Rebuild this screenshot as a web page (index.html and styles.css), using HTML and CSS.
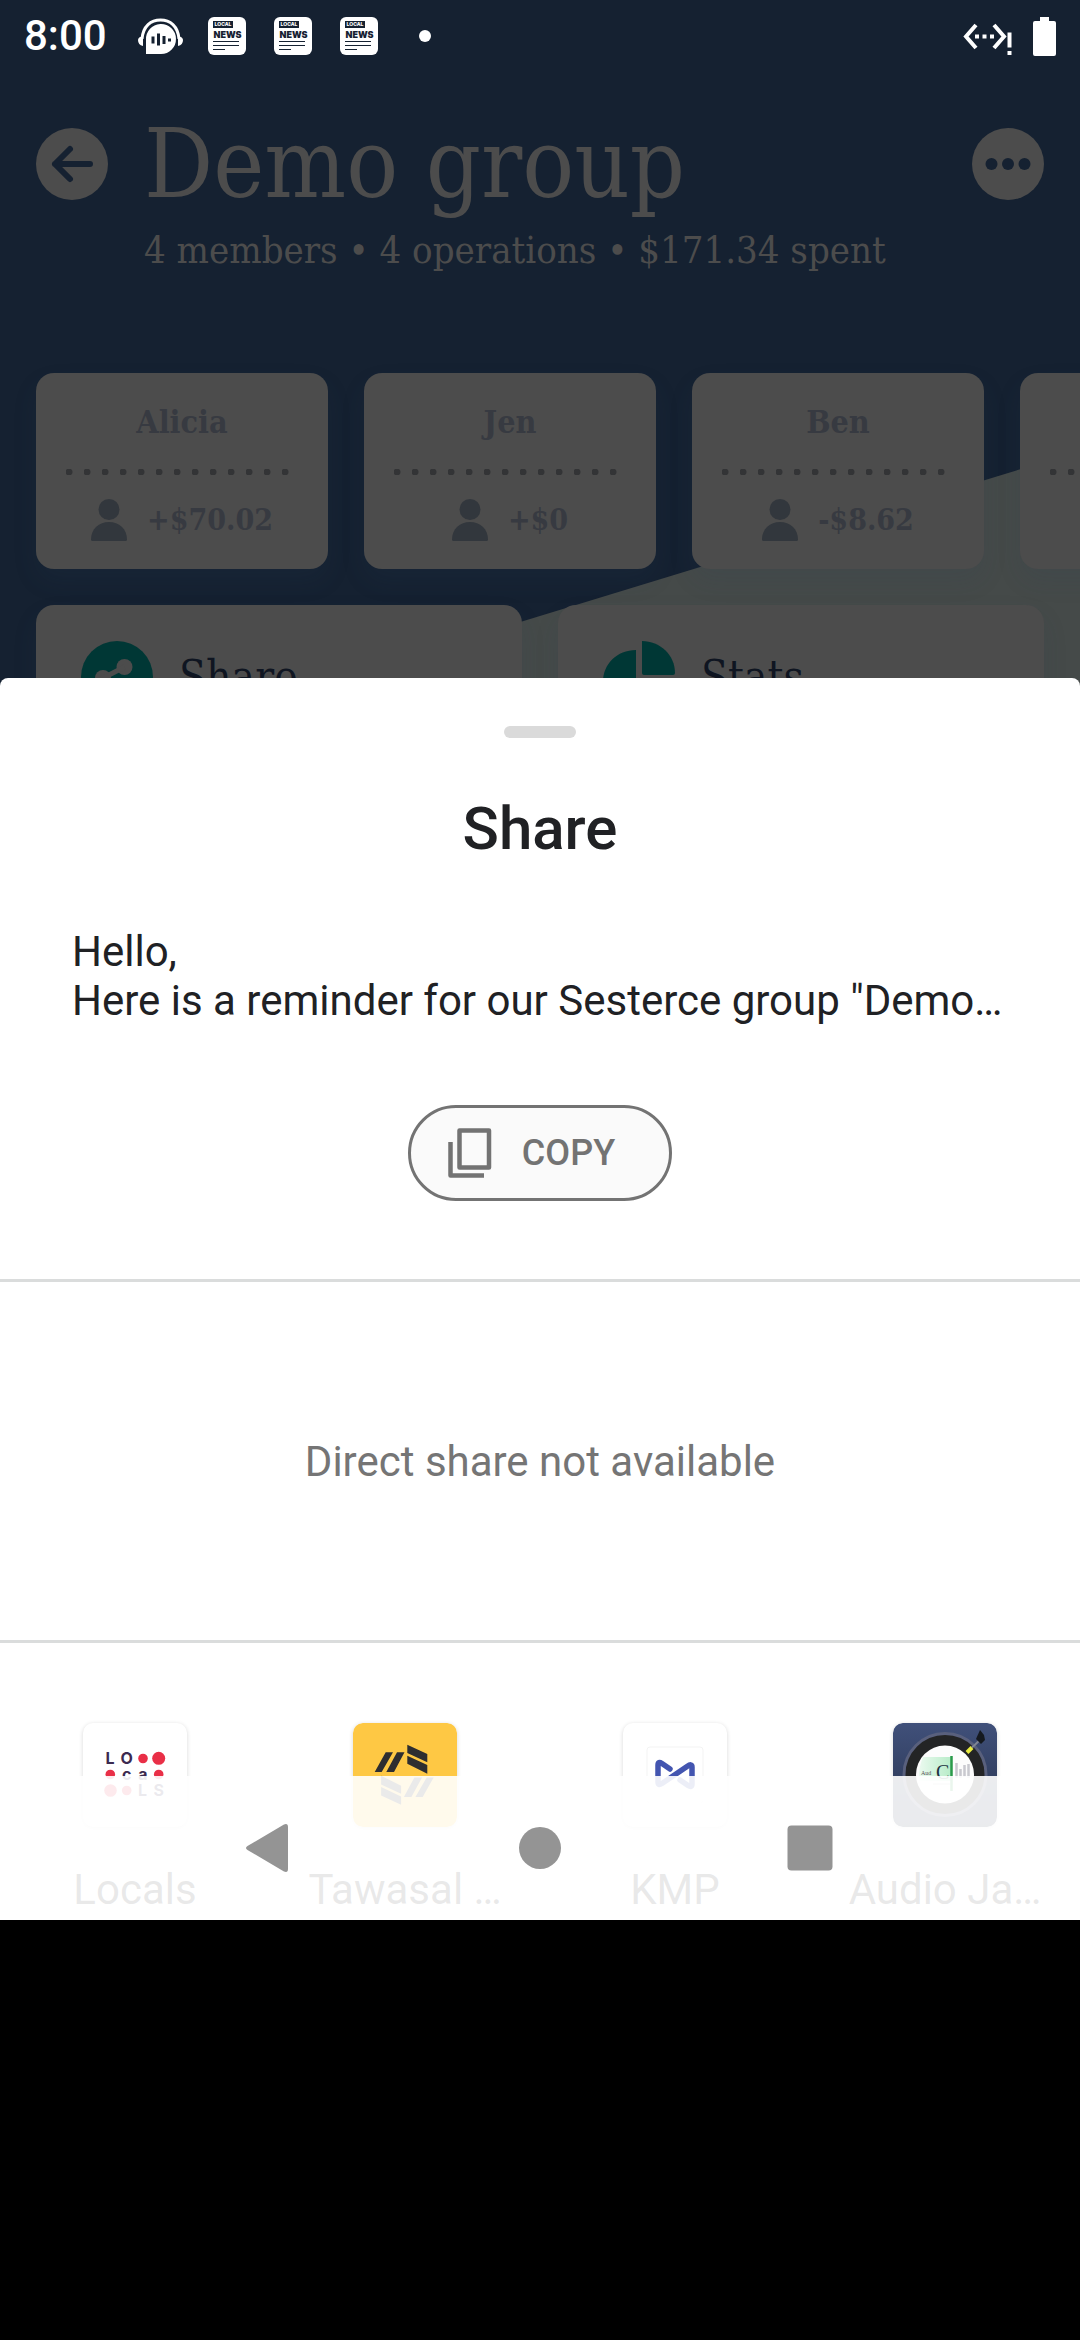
FILE: index.html
```html
<!DOCTYPE html>
<html lang="en">
<head>
<meta charset="utf-8">
<meta name="viewport" content="width=device-width, initial-scale=1">
<title>Demo group – Share</title>
<link rel="stylesheet" href="styles.css">
</head>
<body>
<svg class="defs" aria-hidden="true">
  <symbol id="news" viewBox="0 0 38 38">
    <rect width="38" height="38" rx="6" fill="#fff"/>
    <rect x="5" y="4" width="20" height="7" fill="#152131"/>
    <text x="15" y="9.2" text-anchor="middle" class="news-small">LOCAL</text>
    <text x="19.500" y="21" text-anchor="middle" class="news-big">NEWS</text>
    <path d="M5 24.500h26M5 28.500h26M5 32.500h12" stroke="#152131" stroke-width="1.200"/>
  </symbol>
  <symbol id="person" viewBox="0 0 36 42">
    <circle cx="18" cy="10.500" r="10.500"/>
    <path d="M0 40.500C0 30 8 23 18 23s18 7 18 17.500q0 1.500-1.500 1.500h-33Q0 42 0 40.500z"/>
  </symbol>
</svg>

<div class="screen">
  <section class="app">
    <svg class="slope" viewBox="0 0 1080 330" preserveAspectRatio="none" aria-hidden="true"><path d="M0 330L1080 0V330z"/></svg>

    <div class="status">
      <span class="clock">8:00</span>
      <svg class="headset" width="45" height="37" viewBox="0 0 45 37" fill="none">
        <path d="M4 21C5 8 13 2 22.500 2S40 8 41 21" stroke="#fff" stroke-width="3"/>
        <path d="M5 18v10q-5-1-5-6 0-3 5-4zM40 18v10q5-1 5-6 0-3-5-4z" fill="#fff"/>
        <path d="M8 36V22A15 15 0 1 1 23 36z" fill="#fff"/>
        <path d="M15 18.500v7M20.500 15.500v12M26 18v8M31.500 20.500v3" stroke="#152131" stroke-width="3"/>
      </svg>
      <svg width="38" height="38"><use href="#news"/></svg>
      <svg width="38" height="38"><use href="#news"/></svg>
      <svg width="38" height="38"><use href="#news"/></svg>
      <span class="more-dot"></span>
      <svg class="signal" width="50" height="38" viewBox="0 0 50 38" fill="none" stroke="#fff">
        <path d="M13 8L3 19.500 13 31M31 8L41 19.500 31 31" stroke-width="4"/>
        <path d="M12 19.500h4M19.500 19.500h4M27 19.500h4M46.500 15.500v15M46.500 34v4" stroke-width="4"/>
      </svg>
      <svg width="23" height="39" viewBox="0 0 23 39" fill="#fff"><path d="M7 0h9v4h5q2 0 2 2v31q0 2-2 2H2q-2 0-2-2V6q0-2 2-2h5z"/></svg>
    </div>

    <header class="header">
      <button class="round" aria-label="Back">
        <svg width="72" height="72" viewBox="0 0 72 72" fill="none" stroke="#152131" stroke-width="6" stroke-linecap="round" stroke-linejoin="round"><path d="M54 36H19M34 21L19 36l15 15"/></svg>
      </button>
      <div class="heading">
        <h1>Demo group</h1>
        <p>4 members • 4 operations • $171.34 spent</p>
      </div>
      <button class="round" aria-label="More">
        <svg width="72" height="72" viewBox="0 0 72 72" fill="#152131"><circle cx="19.500" cy="36" r="6"/><circle cx="36" cy="36" r="6"/><circle cx="52.500" cy="36" r="6"/></svg>
      </button>
    </header>

    <div class="members">
      <article class="member"><h2>Alicia</h2><div class="dots"></div><p><svg width="36" height="42"><use href="#person"/></svg>+$70.02</p></article>
      <article class="member"><h2>Jen</h2><div class="dots"></div><p><svg width="36" height="42"><use href="#person"/></svg>+$0</p></article>
      <article class="member"><h2>Ben</h2><div class="dots"></div><p><svg width="36" height="42"><use href="#person"/></svg>-$8.62</p></article>
      <article class="member"><div class="dots last"></div></article>
    </div>

    <div class="actions">
      <button class="action">
        <svg width="72" height="72" viewBox="0 0 72 72"><circle cx="36" cy="36" r="36" fill="#003735"/><g fill="#4c4c4c"><circle cx="43.500" cy="26" r="8"/><circle cx="22" cy="37" r="8"/><circle cx="43.500" cy="48" r="8"/></g><path d="M43.500 26L22 37l21.500 11" fill="none" stroke="#4c4c4c" stroke-width="5"/></svg>
        Share
      </button>
      <button class="action">
        <svg width="72" height="72" viewBox="0 0 72 72" fill="#003735"><path d="M39 0C57 0 72 14 72 32q0 2-2 2H41q-2 0-2-2z"/><path d="M33 9C14 9 0 23 0 41s14 31 32 31 31-14 31-29q0-4-4-4H33z"/></svg>
        Stats
      </button>
    </div>
  </section>

  <main class="sheet">
    <div class="handle"></div>
    <h2 class="sheet-title">Share</h2>
    <p class="message">Hello,<br>Here is a reminder for our Sesterce group "Demo…</p>
    <button class="copy">
      <svg width="44" height="50" viewBox="0 0 44 50" fill="none" stroke="#737373" stroke-width="4.500" stroke-linejoin="round"><rect x="11.500" y="2.500" width="29.500" height="37"/><path d="M2.500 14v33.500H36"/></svg>
      COPY
    </button>
    <div class="direct">Direct share not available</div>
    <div class="apps">
      <a class="app-link" href="#">
        <svg class="app-icon" viewBox="0 0 104 104">
          <rect x="1" y="1" width="102" height="102" rx="9" fill="#fff"/>
          <g fill="#e92f47"><circle cx="60" cy="35.500" r="4.800"/><circle cx="75.700" cy="35.300" r="6.500"/><circle cx="27.300" cy="51.500" r="4.800"/><circle cx="75.700" cy="51.500" r="4.800"/><circle cx="27.500" cy="67.500" r="6.300"/><circle cx="43.700" cy="67.500" r="4.800"/></g>
          <g class="locals-text"><text x="27" y="41">L</text><text x="43.700" y="41">O</text><text x="43.700" y="57">c</text><text x="60" y="57">a</text><text x="59.500" y="73">L</text><text x="75.700" y="73">S</text></g>
        </svg>
        <span>Locals</span>
      </a>
      <a class="app-link" href="#">
        <svg class="app-icon" viewBox="0 0 104 104">
          <rect width="104" height="104" rx="9" fill="#fec844"/>
          <g fill="#2e2e30"><path id="tw" d="M21.700 49L32.700 29.300H40L28.700 49zM33.300 49L44 29.300h7.500L41 49zM54.300 21.700l20 9.300v8.300l-20-9.300zM54.300 32.700l20 9.300v8.700l-20-10z"/><use href="#tw" transform="rotate(180 51.200 51.700)"/></g>
        </svg>
        <span>Tawasal …</span>
      </a>
      <a class="app-link" href="#">
        <svg class="app-icon" viewBox="0 0 104 104">
          <rect x="1" y="1" width="102" height="102" rx="9" fill="#fff"/>
          <rect x="24" y="24" width="56" height="56" rx="3" fill="#fff" stroke="#f3f3f3"/>
          <path d="M47 46L39 40.500Q35 38 35 42V59Q35 63 39 60.500L64 43.500Q69 40 69 44V61Q69 65 65 62.500L57 57" fill="none" stroke="#4355b0" stroke-width="5.500" stroke-linecap="round"/>
        </svg>
        <span>KMP</span>
      </a>
      <a class="app-link" href="#">
        <svg class="app-icon" viewBox="0 0 104 104">
          <defs>
            <linearGradient id="navy" x2="0" y2="1"><stop stop-color="#40507a"/><stop offset="1" stop-color="#27324d"/></linearGradient>
            <linearGradient id="mint" x1="0" x2="1"><stop stop-color="#e4f9ea"/><stop offset="1" stop-color="#9be5b3"/></linearGradient>
          </defs>
          <rect width="104" height="104" rx="9" fill="url(#navy)"/>
          <circle cx="52" cy="51.500" r="41" fill="#232425" stroke="#59607d" stroke-width="3"/>
          <circle cx="52" cy="51.500" r="29" fill="#fcfcfc"/>
          <path d="M30 34h28v24H26q-1-12 4-24z" fill="url(#mint)" opacity=".7"/>
          <text x="28" y="52" class="audio-small">Aud</text>
          <text x="43" y="56" class="audio-c">C</text>
          <path d="M58.500 33v35" stroke="#2a9a4a" stroke-width="2.500"/>
          <path d="M63.500 40v15M67.500 46v9M71.500 42v12M75.500 41v14" stroke="#c9c9cf" stroke-width="2.500"/>
          <path d="M40 61h17" stroke="#bbb"/>
          <path d="M74 29.500L79 24.500" stroke="#e9ec3f" stroke-width="4"/>
          <path d="M79 24.500L88 16" stroke="#7f8594" stroke-width="2"/>
          <path d="M87 7l4 5 1 5-4 4-5-5z" fill="#15191f"/>
        </svg>
        <span>Audio Ja…</span>
      </a>
    </div>
    <nav class="navbar">
      <button aria-label="Back"><svg width="48" height="48" viewBox="0 0 48 48"><path d="M1.500 22L38 .500Q42 -1 42 3V45Q42 49 38 47.500L1.500 26Q-1.500 24 1.500 22z"/></svg></button>
      <button aria-label="Home"><svg width="48" height="48" viewBox="0 0 48 48"><circle cx="24" cy="24" r="21"/></svg></button>
      <button aria-label="Recents"><svg width="48" height="48" viewBox="0 0 48 48"><rect x="1.500" y="1.500" width="45" height="45" rx="4"/></svg></button>
    </nav>
  </main>
</div>
</body>
</html>
```
FILE: styles.css
```css
* {
  box-sizing: border-box;
}

body {
  margin: 0;
  background: #000;
  font-family: Roboto, "Liberation Sans", sans-serif;
}

h1, h2, p {
  margin: 0;
}

button {
  margin: 0;
  padding: 0;
  border: 0;
  background: none;
  font: inherit;
}

svg {
  display: block;
  flex: none;
}

.defs {
  position: absolute;
  width: 38px;
  height: 42px;
}

/* Dimmed group page */
.app {
  position: relative;
  overflow: hidden;
  background: #152131;
  color: #4c4c4c;
  font-family: "Roboto Slab", "DejaVu Serif Condensed", "DejaVu Serif", serif;
}

.slope {
  position: absolute;
  left: 0;
  bottom: -32px;
  width: 100%;
  height: 330px;
  fill: #454a49;
}

.status {
  position: relative;
  display: flex;
  align-items: center;
  gap: 28px;
  height: 72px;
  padding: 0 24px;
}

.clock {
  width: 86px;
  color: #fff;
  font: 500 42px/48px Roboto, sans-serif;
}

.headset {
  margin-right: -3px;
}

.more-dot {
  width: 12px;
  height: 12px;
  margin-left: 13px;
  border-radius: 50%;
  background: #fff;
}

.signal {
  margin: 0 -8px 0 auto;
}

.news-small {
  fill: #fff;
  font: 800 5px Inter, sans-serif;
}

.news-big {
  fill: #152131;
  font: 900 9px Inter, sans-serif;
}

.header {
  position: relative;
  display: flex;
  gap: 36px;
  padding: 36px 36px 0;
}

.round {
  flex: none;
  width: 72px;
  height: 72px;
  margin-top: 20px;
  border-radius: 50%;
  background: #4c4c4c;
}

.heading {
  flex: 1;
}

.heading h1 {
  font-size: 96px;
  font-weight: 300;
  line-height: 112px;
}

.heading p {
  font-size: 38px;
  line-height: 60px;
}

.members {
  position: relative;
  display: flex;
  gap: 36px;
  padding: 93px 0 36px 36px;
  overflow: hidden;
}

.member {
  flex: none;
  width: 292px;
  height: 196px;
  padding: 26px 30px;
  border-radius: 18px;
  background: #4c4c4c;
  box-shadow: 0 12px 24px rgba(40, 64, 90, .12);
  color: #373a41;
  text-align: center;
}

.member h2 {
  font-size: 32px;
  font-weight: 700;
  line-height: 46px;
}

.dots {
  height: 6px;
  margin: 24px 0;
  background: radial-gradient(circle at 3px 3px, #333436 3px, transparent 4px) 0 0 / 18px 6px;
}

.dots.last {
  margin-top: 70px;
}

.member p {
  display: flex;
  justify-content: center;
  align-items: center;
  gap: 20px;
  font-size: 30px;
  font-weight: 700;
  line-height: 42px;
}

.member svg {
  fill: #32373d;
}

.actions {
  position: relative;
  display: flex;
  gap: 36px;
  padding: 0 36px;
}

.action {
  flex: 1;
  display: flex;
  align-items: center;
  gap: 26px;
  padding: 36px 45px;
  border-radius: 18px;
  background: #4c4c4c;
  box-shadow: 0 12px 24px rgba(40, 64, 90, .12);
  color: #0f1521;
  font-size: 44px;
  line-height: 72px;
}

/* Share sheet */
.sheet {
  position: relative;
  margin-top: -71px;
  padding-top: 48px;
  border-radius: 8px 8px 0 0;
  background: #fff;
  color: #202124;
  font-size: 42px;
  line-height: 49px;
}

.handle {
  width: 72px;
  height: 12px;
  margin: 0 auto;
  border-radius: 6px;
  background: #dadada;
}

.sheet-title {
  margin-top: 56px;
  font-size: 60px;
  font-weight: 500;
  line-height: 70px;
  text-align: center;
}

.message {
  padding: 63px 72px 0;
}

.copy {
  display: flex;
  align-items: center;
  gap: 30px;
  height: 96px;
  margin: 80px auto 78px;
  padding: 0 54px 0 37px;
  border: 3px solid #737373;
  border-radius: 48px;
  background: #fafafa;
  color: #737373;
  font-size: 36px;
  font-weight: 500;
}

.direct {
  padding: 155px 0 154px;
  border: solid #dadcdc;
  border-width: 3px 0;
  color: #757575;
  text-align: center;
}

.apps {
  display: grid;
  grid-template-columns: repeat(4, 1fr);
  padding: 80px 0 6px;
}

.app-link {
  display: flex;
  flex-direction: column;
  align-items: center;
  gap: 38px;
  color: #202124;
  text-decoration: none;
  white-space: nowrap;
}

.app-icon {
  width: 104px;
  height: 104px;
  border-radius: 10px;
  box-shadow: 0 1px 4px rgba(0, 0, 0, .16);
}

.locals-text {
  fill: #3b2a50;
  font: 700 16px Inter, sans-serif;
  text-anchor: middle;
}

.audio-small {
  fill: #555;
  font: 6px "Liberation Serif", serif;
}

.audio-c {
  fill: #234;
  font: 20px "Liberation Serif", serif;
}

.navbar {
  position: absolute;
  left: 0;
  right: 0;
  bottom: 0;
  display: flex;
  justify-content: center;
  align-items: center;
  gap: 222px;
  height: 144px;
  background: rgba(255, 255, 255, .9);
}

.navbar svg {
  fill: #949494;
}
```
